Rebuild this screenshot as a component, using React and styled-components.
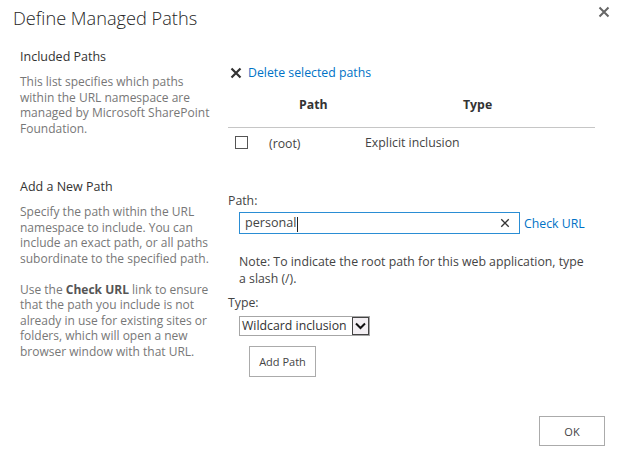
import React from 'react'
import styled, { createGlobalStyle } from 'styled-components'

const FONT = `"Segoe UI", "Open Sans", "Noto Sans", sans-serif`

const GlobalStyle = createGlobalStyle`
  html, body {
    margin: 0;
    padding: 0;
    background: #fff;
    font-family: ${FONT};
    color: #444;
  }
`

const Dialog = styled.div`
  width: 620px;
  height: 459px;
  box-sizing: border-box;
  display: flex;
  flex-direction: column;
`

const TitleBar = styled.div`
  display: flex;
  justify-content: space-between;
  align-items: flex-start;
  padding: 5px 8px 0 13px;
  height: 48px;
  box-sizing: border-box;
`

const Title = styled.h1`
  margin: 0;
  font-weight: 300;
  font-size: 18.2px;
  color: #262626;
  line-height: 26px;
`

const CloseBtn = styled.button`
  border: none;
  background: none;
  padding: 0;
  margin-top: 1px;
  width: 14px;
  height: 14px;
  display: flex;
  cursor: pointer;
`

const Section = styled.div`
  display: grid;
  grid-template-columns: 208px 1fr;
  padding-left: 20px;
  padding-right: 25px;
  margin-top: ${({ $top }) => $top || 0}px;
`

const SideCol = styled.div`
  display: flex;
  flex-direction: column;
`

const SideTitle = styled.div`
  font-size: 12.5px;
  color: #333;
  line-height: 18px;
  margin-bottom: 8px;
`

const SideText = styled.p`
  margin: 0 0 ${({ $gap }) => $gap || 0}px;
  font-size: 12px;
  line-height: 15.5px;
  color: #777;
  width: 192px;

  b {
    color: #555;
  }
`

const MainCol = styled.div`
  display: flex;
  flex-direction: column;
`

const LinkRow = styled.a`
  display: flex;
  align-items: center;
  gap: 6px;
  margin: 16px 0 0 2px;
  font-size: 12.3px;
  color: #0072c6;
  text-decoration: none;
  line-height: 18px;
`

const Table = styled.div`
  margin-top: 9px;
  width: 367px;
`

const Row = styled.div`
  display: grid;
  grid-template-columns: 41px 96px 1fr;
  align-items: center;
  box-sizing: border-box;
  font-size: 12.3px;
  color: #444;
  height: ${({ $h }) => $h}px;
  padding-bottom: ${({ $pb }) => $pb || 0}px;
  border-bottom: ${({ $line }) => ($line ? '1px solid #c6c6c6' : 'none')};
`

const HeadCell = styled.div`
  font-weight: 700;
  color: #333;
  padding-left: ${({ $pad }) => $pad || 0}px;
`

const Check = styled.span`
  width: 11px;
  height: 11px;
  border: 1px solid #555;
  margin-left: 7px;
  background: #fff;
`

const Cell = styled.div`
  padding-top: ${({ $pt }) => $pt || 0}px;
`

const Label = styled.div`
  font-size: 12.3px;
  color: #444;
  line-height: 18px;
  margin-top: ${({ $top }) => $top || 0}px;
`

const InputRow = styled.div`
  display: flex;
  align-items: center;
  margin: 2px 0 0 11px;
  gap: 4px;
`

const InputBox = styled.div`
  width: 281px;
  height: 22px;
  box-sizing: border-box;
  border: 1px solid #2a8dd4;
  display: flex;
  align-items: center;
  justify-content: space-between;
  padding: 0 9px 0 5px;
  font-size: 12.6px;
  color: #444;
`

const Caret = styled.span`
  display: inline-block;
  width: 1px;
  height: 15px;
  background: #222;
  vertical-align: middle;
  margin-left: 1px;
`

const Link = styled.a`
  font-size: 12.3px;
  color: #0072c6;
  text-decoration: none;
`

const Note = styled.p`
  margin: 19px 0 0 11px;
  font-size: 12.3px;
  line-height: 17px;
  color: #444;
  width: 345px;
`

const SelectBox = styled.div`
  margin: 4px 0 0 11px;
  display: inline-flex;
  align-items: stretch;
  width: 131px;
  height: 20px;
  box-sizing: border-box;
  border: 1px solid #a6a6a6;
  font-size: 12.3px;
  color: #333;
`

const SelectText = styled.span`
  flex: 1;
  padding-left: 2px;
  line-height: 18px;
  white-space: nowrap;
  overflow: hidden;
`

const Arrow = styled.span`
  width: 17px;
  border: 1px solid #444;
  background: #f3eff3;
  display: flex;
  align-items: center;
  justify-content: center;
  box-sizing: border-box;
`

const Button = styled.button`
  font-family: ${FONT};
  font-size: 11px;
  color: #444;
  background: #fff;
  border: 1px solid #ababab;
  width: ${({ $w }) => $w}px;
  height: ${({ $h }) => $h}px;
  padding: 0;
  cursor: pointer;
`

const AddWrap = styled.div`
  margin: 10px 0 0 21px;
`

const Footer = styled.div`
  display: flex;
  justify-content: flex-end;
  padding: 0 15px 0 0;
  margin-top: 39px;
`

const XIcon = ({ size = 12, color = '#333', width = 2 }) => (
  <svg width={size} height={size} viewBox="0 0 12 12">
    <path d="M1.5 1.5 L10.5 10.5 M10.5 1.5 L1.5 10.5" stroke={color} strokeWidth={width} />
  </svg>
)

export default function App() {
  return (
    <>
      <GlobalStyle />
      <Dialog>
        <TitleBar>
          <Title>Define Managed Paths</Title>
          <CloseBtn aria-label="Close">
            <XIcon size={12} color="#666" width={2} />
          </CloseBtn>
        </TitleBar>

        <Section>
          <SideCol>
            <SideTitle>Included Paths</SideTitle>
            <SideText>
              This list specifies which paths within the URL namespace are managed by Microsoft
              SharePoint Foundation.
            </SideText>
          </SideCol>
          <MainCol>
            <LinkRow href="#">
              <XIcon size={12} color="#333" width={2.2} />
              Delete selected paths
            </LinkRow>
            <Table>
              <Row $h={37} $pb={9} $line>
                <span />
                <HeadCell $pad={30}>Path</HeadCell>
                <HeadCell $pad={98}>Type</HeadCell>
              </Row>
              <Row $h={28}>
                <Check />
                <Cell $pt={3}>(root)</Cell>
                <Cell>Explicit inclusion</Cell>
              </Row>
            </Table>
          </MainCol>
        </Section>

        <Section $top={22}>
          <SideCol>
            <SideTitle>Add a New Path</SideTitle>
            <SideText $gap={15.5}>
              Specify the path within the URL namespace to include. You can include an exact path,
              or all paths subordinate to the specified path.
            </SideText>
            <SideText>
              Use the <b>Check URL</b> link to ensure that the path you include is not already in
              use for existing sites or folders, which will open a new browser window with that URL.
            </SideText>
          </SideCol>
          <MainCol>
            <Label $top={14}>Path:</Label>
            <InputRow>
              <InputBox>
                <span>
                  personal
                  <Caret />
                </span>
                <XIcon size={10} color="#333" width={1.6} />
              </InputBox>
              <Link href="#">Check URL</Link>
            </InputRow>
            <Note>Note: To indicate the root path for this web application, type a slash (/).</Note>
            <Label $top={7}>Type:</Label>
            <div>
              <SelectBox>
                <SelectText>Wildcard inclusion</SelectText>
                <Arrow>
                  <svg width="11" height="8" viewBox="0 0 11 8">
                    <path d="M1 1.5 L5.5 6 L10 1.5" fill="none" stroke="#111" strokeWidth="2" />
                  </svg>
                </Arrow>
              </SelectBox>
            </div>
            <AddWrap>
              <Button $w={67} $h={31}>Add Path</Button>
            </AddWrap>
          </MainCol>
        </Section>

        <Footer>
          <Button $w={66} $h={30}>OK</Button>
        </Footer>
      </Dialog>
    </>
  )
}
